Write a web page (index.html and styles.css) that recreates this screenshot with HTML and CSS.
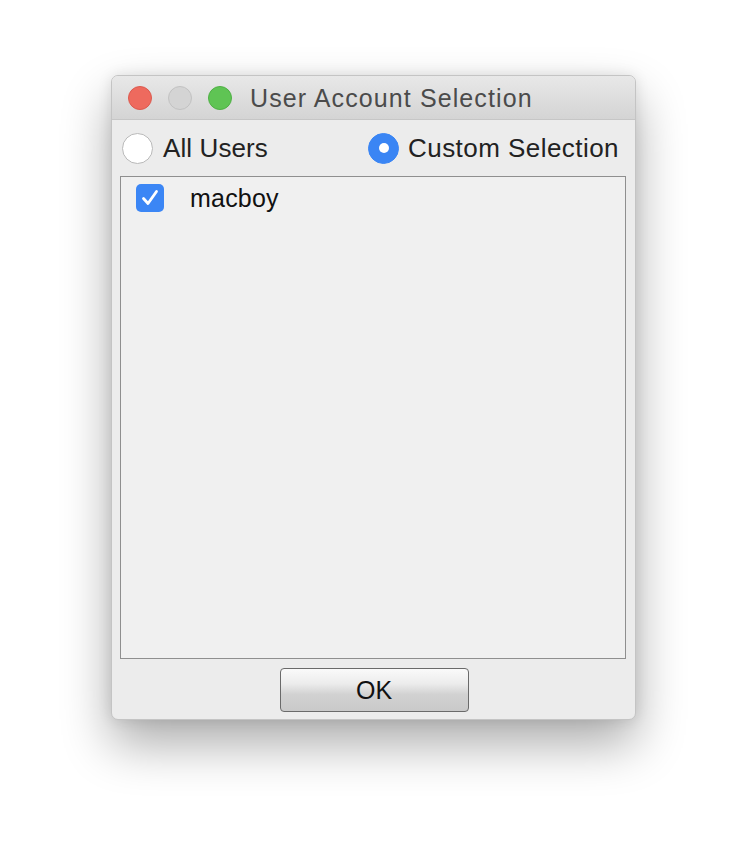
FILE: index.html
```html
<!DOCTYPE html>
<html>
<head>
<meta charset="utf-8">
<link rel="stylesheet" href="styles.css">
</head>
<body>
<div class="window">
  <div class="titlebar">
    <span class="light red"></span>
    <span class="light gray"></span>
    <span class="light green"></span>
    <span class="title">User Account Selection</span>
  </div>
  <div class="radios">
    <label class="radio"><span class="circle"></span><span class="rlabel">All Users</span></label>
    <label class="radio"><span class="circle on"></span><span class="rlabel">Custom Selection</span></label>
  </div>
  <div class="list">
    <div class="item">
      <span class="check"><svg width="28" height="28" viewBox="0 0 28 28"><path d="M7.5 14.5 L12 19.5 L20.5 7.5" fill="none" stroke="#fff" stroke-width="2.8" stroke-linecap="round" stroke-linejoin="round"/></svg></span>
      <span class="name">macboy</span>
    </div>
  </div>
  <div class="footer">
    <button class="ok">OK</button>
  </div>
</div>
</body>
</html>
```
FILE: styles.css
```css
html, body { margin: 0; padding: 0; background: #ffffff; }
body {
  font-family: "Liberation Sans", Arial, sans-serif;
  min-height: 868px;
  padding-top: 75px;
  box-sizing: border-box;
}
.window {
  margin: 0 0 0 111px;
  width: 523px;
  height: 643px;
  border: 1px solid #c4c4c4;
  border-radius: 7px;
  background: #ececec;
  box-shadow: 0 24px 50px rgba(0,0,0,0.33), 0 0 14px rgba(0,0,0,0.10);
  display: flex;
  flex-direction: column;
  overflow: hidden;
}
.titlebar {
  height: 43px;
  border-bottom: 1px solid #c6c6c6;
  background: linear-gradient(#e8e8e8, #d4d4d4);
  display: flex;
  align-items: center;
  padding-left: 16px;
  gap: 16px;
}
.light { width: 24px; height: 24px; border-radius: 50%; box-sizing: border-box; }
.red { background: #ee6a5e; border: 1px solid #dc5a4f; }
.gray { background: #d4d4d4; border: 1px solid #c2c2c2; }
.green { background: #5fc454; border: 1px solid #4fb045; }
.title {
  margin-left: 2px;
  margin-top: 2px;
  font-size: 25px;
  letter-spacing: 1.1px;
  color: #4b4b4b;
}
.radios {
  height: 56px;
  display: flex;
  justify-content: space-between;
  align-items: center;
  padding: 0 16px 0 10px;
}
.radio { display: flex; align-items: center; gap: 10px; }
.circle {
  width: 31px; height: 31px; border-radius: 50%;
  box-sizing: border-box;
  background: #fff;
  border: 1px solid #b9b9b9;
  display: flex; align-items: center; justify-content: center;
}
.circle.on { background: #3a85f4; border-color: #3a85f4; }
.circle.on::after {
  content: ""; width: 10px; height: 10px; border-radius: 50%; background: #fff;
}
.rlabel { font-size: 26px; letter-spacing: 0.1px; color: #222; }
.radio:last-child .rlabel { letter-spacing: 0.45px; }
.radio:last-child { gap: 9px; }
.list {
  margin: 0 9px 0 8px;
  border: 1px solid #8f8f8f;
  background: #f0f0f0;
  padding: 7px 15px;
  height: 467px;
}
.item { display: flex; align-items: center; gap: 26px; height: 28px; }
.check {
  width: 28px; height: 28px; border-radius: 5px; background: #3b86f5;
  display: flex;
}
.name { font-size: 25px; color: #111; letter-spacing: 0.2px; }
.footer {
  flex: 1;
  display: flex;
  justify-content: center;
  padding-top: 9px;
  padding-left: 1px;
}
.ok {
  width: 189px; height: 44px;
  border: 1.5px solid #6a6a6a;
  border-radius: 4px;
  background: linear-gradient(#fafafa 0%, #ececec 35%, #d2d2d2 60%, #c9c9c9 100%);
  font-family: "Liberation Sans", Arial, sans-serif;
  font-size: 25px;
  color: #111;
  padding: 0;
}
```
